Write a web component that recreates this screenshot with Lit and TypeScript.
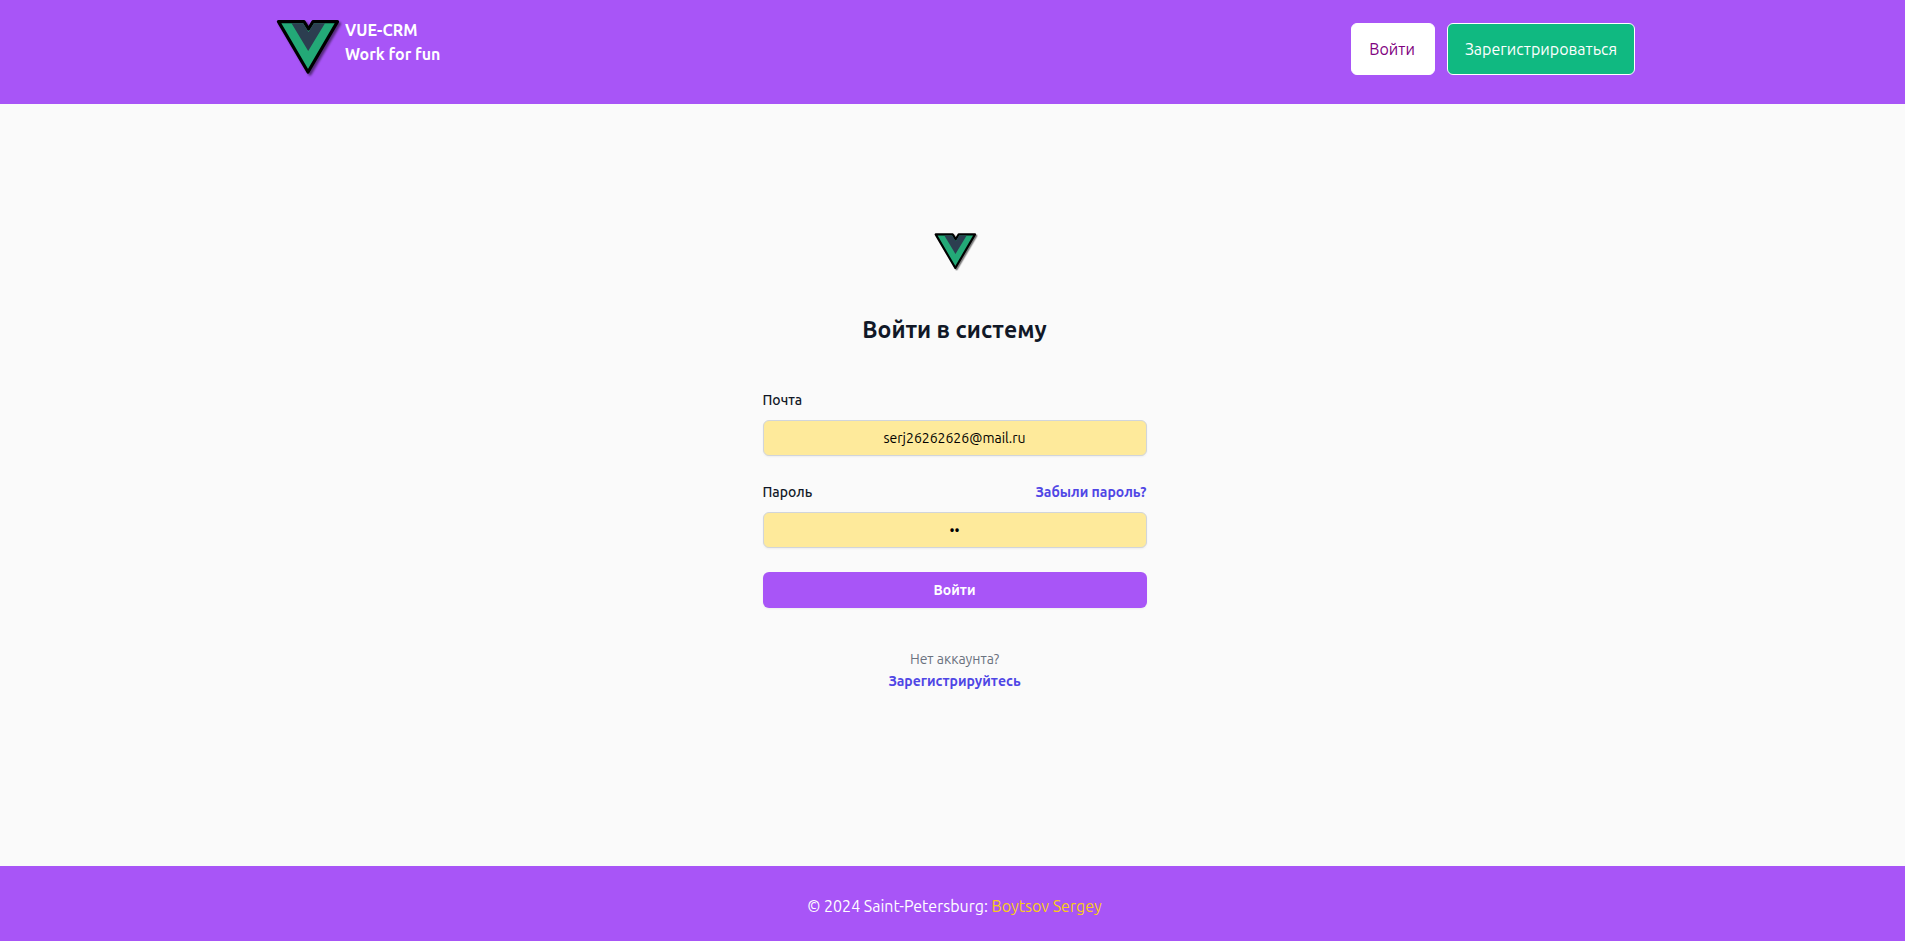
import { LitElement, html, css } from "lit";
import { customElement } from "lit/decorators.js";

@customElement("vue-logo")
class VueLogo extends LitElement {
  static styles = css`
    :host {
      display: block;
    }
    .logo {
      display: block;
      width: 100%;
      height: auto;
      overflow: visible;
    }
    .shape {
      filter: drop-shadow(2px 2px 1px rgb(0 0 0 / 0.5));
    }
  `;

  render() {
    return html`
      <svg class="logo" viewBox="0 -6 75 72" role="img" aria-label="Vue">
        <g class="shape">
          <path d="M8.5 9.6H34L38.5 17L43 9.6H67.5L38 60Z" fill="#23a977" stroke="#000" stroke-width="3.2" stroke-linejoin="round" />
          <path d="M21.5 11.2H33.1L38.5 20L43.9 11.2H55L38.2 39Z" fill="#2c3e50" />
        </g>
      </svg>
    `;
  }
}

@customElement("app-root")
class AppRoot extends LitElement {
  static styles = css`
    :host {
      display: flex;
      flex-direction: column;
      min-height: 100vh;
      background: #fafafa;
      color: #111827;
      font-family: Ubuntu, "Noto Sans", sans-serif;
      font-size: 16px;
      line-height: 24px;
    }
    * {
      box-sizing: border-box;
    }
    a {
      text-decoration: none;
    }
    .header {
      background: #a855f7;
      padding: 6px 16px 26px;
    }
    .bar {
      display: flex;
      justify-content: space-between;
      align-items: flex-start;
      max-width: 1365px;
      margin: 0 auto;
    }
    .brand {
      display: flex;
      color: #fff;
      font-weight: 700;
    }
    .brand-logo {
      width: 75px;
    }
    .brand-text {
      display: flex;
      flex-direction: column;
      padding-top: 12px;
    }
    .actions {
      display: flex;
      gap: 12px;
      padding-top: 17px;
    }
    .btn {
      border: 1px solid #fff;
      border-radius: 6px;
      padding: 13px 17px;
      font: inherit;
      cursor: pointer;
    }
    .btn-login {
      background: #fff;
      color: #800080;
      padding-right: 19px;
    }
    .btn-register {
      background: #10b981;
      color: #fff;
    }
    .main {
      flex: 1;
      display: flex;
      flex-direction: column;
      align-items: center;
      padding: 120px 16px 40px 20px;
    }
    .form-logo {
      width: 50px;
    }
    .title {
      margin: 40px 0;
      font-size: 23px;
      line-height: 36px;
      font-weight: 700;
    }
    .form {
      display: flex;
      flex-direction: column;
      gap: 24px;
      width: 100%;
      max-width: 384px;
      font-size: 14px;
    }
    .field {
      display: flex;
      flex-direction: column;
      gap: 8px;
    }
    .row {
      display: flex;
      justify-content: space-between;
    }
    .label {
      font-weight: 500;
    }
    .link {
      color: #4f46e5;
      font-weight: 700;
    }
    .input {
      width: 100%;
      height: 36px;
      border: 1px solid #d1d5db;
      border-radius: 6px;
      background: #feea9b;
      box-shadow: 0 1px 2px rgb(0 0 0 / 0.05);
      color: #000;
      font: inherit;
      text-align: center;
      outline: none;
    }
    .submit {
      border: 0;
      border-radius: 6px;
      padding: 6px 12px;
      background: #a855f7;
      box-shadow: 0 1px 2px rgb(0 0 0 / 0.05);
      color: #fff;
      font: inherit;
      font-weight: 700;
      cursor: pointer;
    }
    .note {
      display: flex;
      flex-direction: column;
      align-items: center;
      margin: 40px 0 0;
      font-size: 14px;
      line-height: 22px;
      color: #6b7280;
    }
    .footer {
      padding: 28px 16px 23px 20px;
      background: #a855f7;
      color: #fff;
      text-align: center;
    }
    .author {
      color: #facc15;
    }
  `;

  render() {
    return html`
      <header class="header">
        <div class="bar">
          <div class="brand">
            <vue-logo class="brand-logo"></vue-logo>
            <div class="brand-text"><span>VUE-CRM</span><span>Work for fun</span></div>
          </div>
          <nav class="actions">
            <button class="btn btn-login" type="button">Войти</button>
            <button class="btn btn-register" type="button">Зарегистрироваться</button>
          </nav>
        </div>
      </header>
      <main class="main">
        <vue-logo class="form-logo"></vue-logo>
        <h2 class="title">Войти в систему</h2>
        <form class="form" @submit=${(e: Event) => e.preventDefault()}>
          <div class="field">
            <label class="label" for="email">Почта</label>
            <input class="input" id="email" type="email" autocomplete="email" value="serj26262626@mail.ru" />
          </div>
          <div class="field">
            <div class="row">
              <label class="label" for="password">Пароль</label>
              <a class="link" href="#">Забыли пароль?</a>
            </div>
            <input class="input" id="password" type="password" autocomplete="current-password" value="12" />
          </div>
          <button class="submit" type="submit">Войти</button>
        </form>
        <p class="note">
          <span>Нет аккаунта?</span>
          <a class="link" href="#">Зарегистрируйтесь</a>
        </p>
      </main>
      <footer class="footer">© 2024 Saint-Petersburg: <a class="author" href="#">Boytsov Sergey</a></footer>
    `;
  }
}
